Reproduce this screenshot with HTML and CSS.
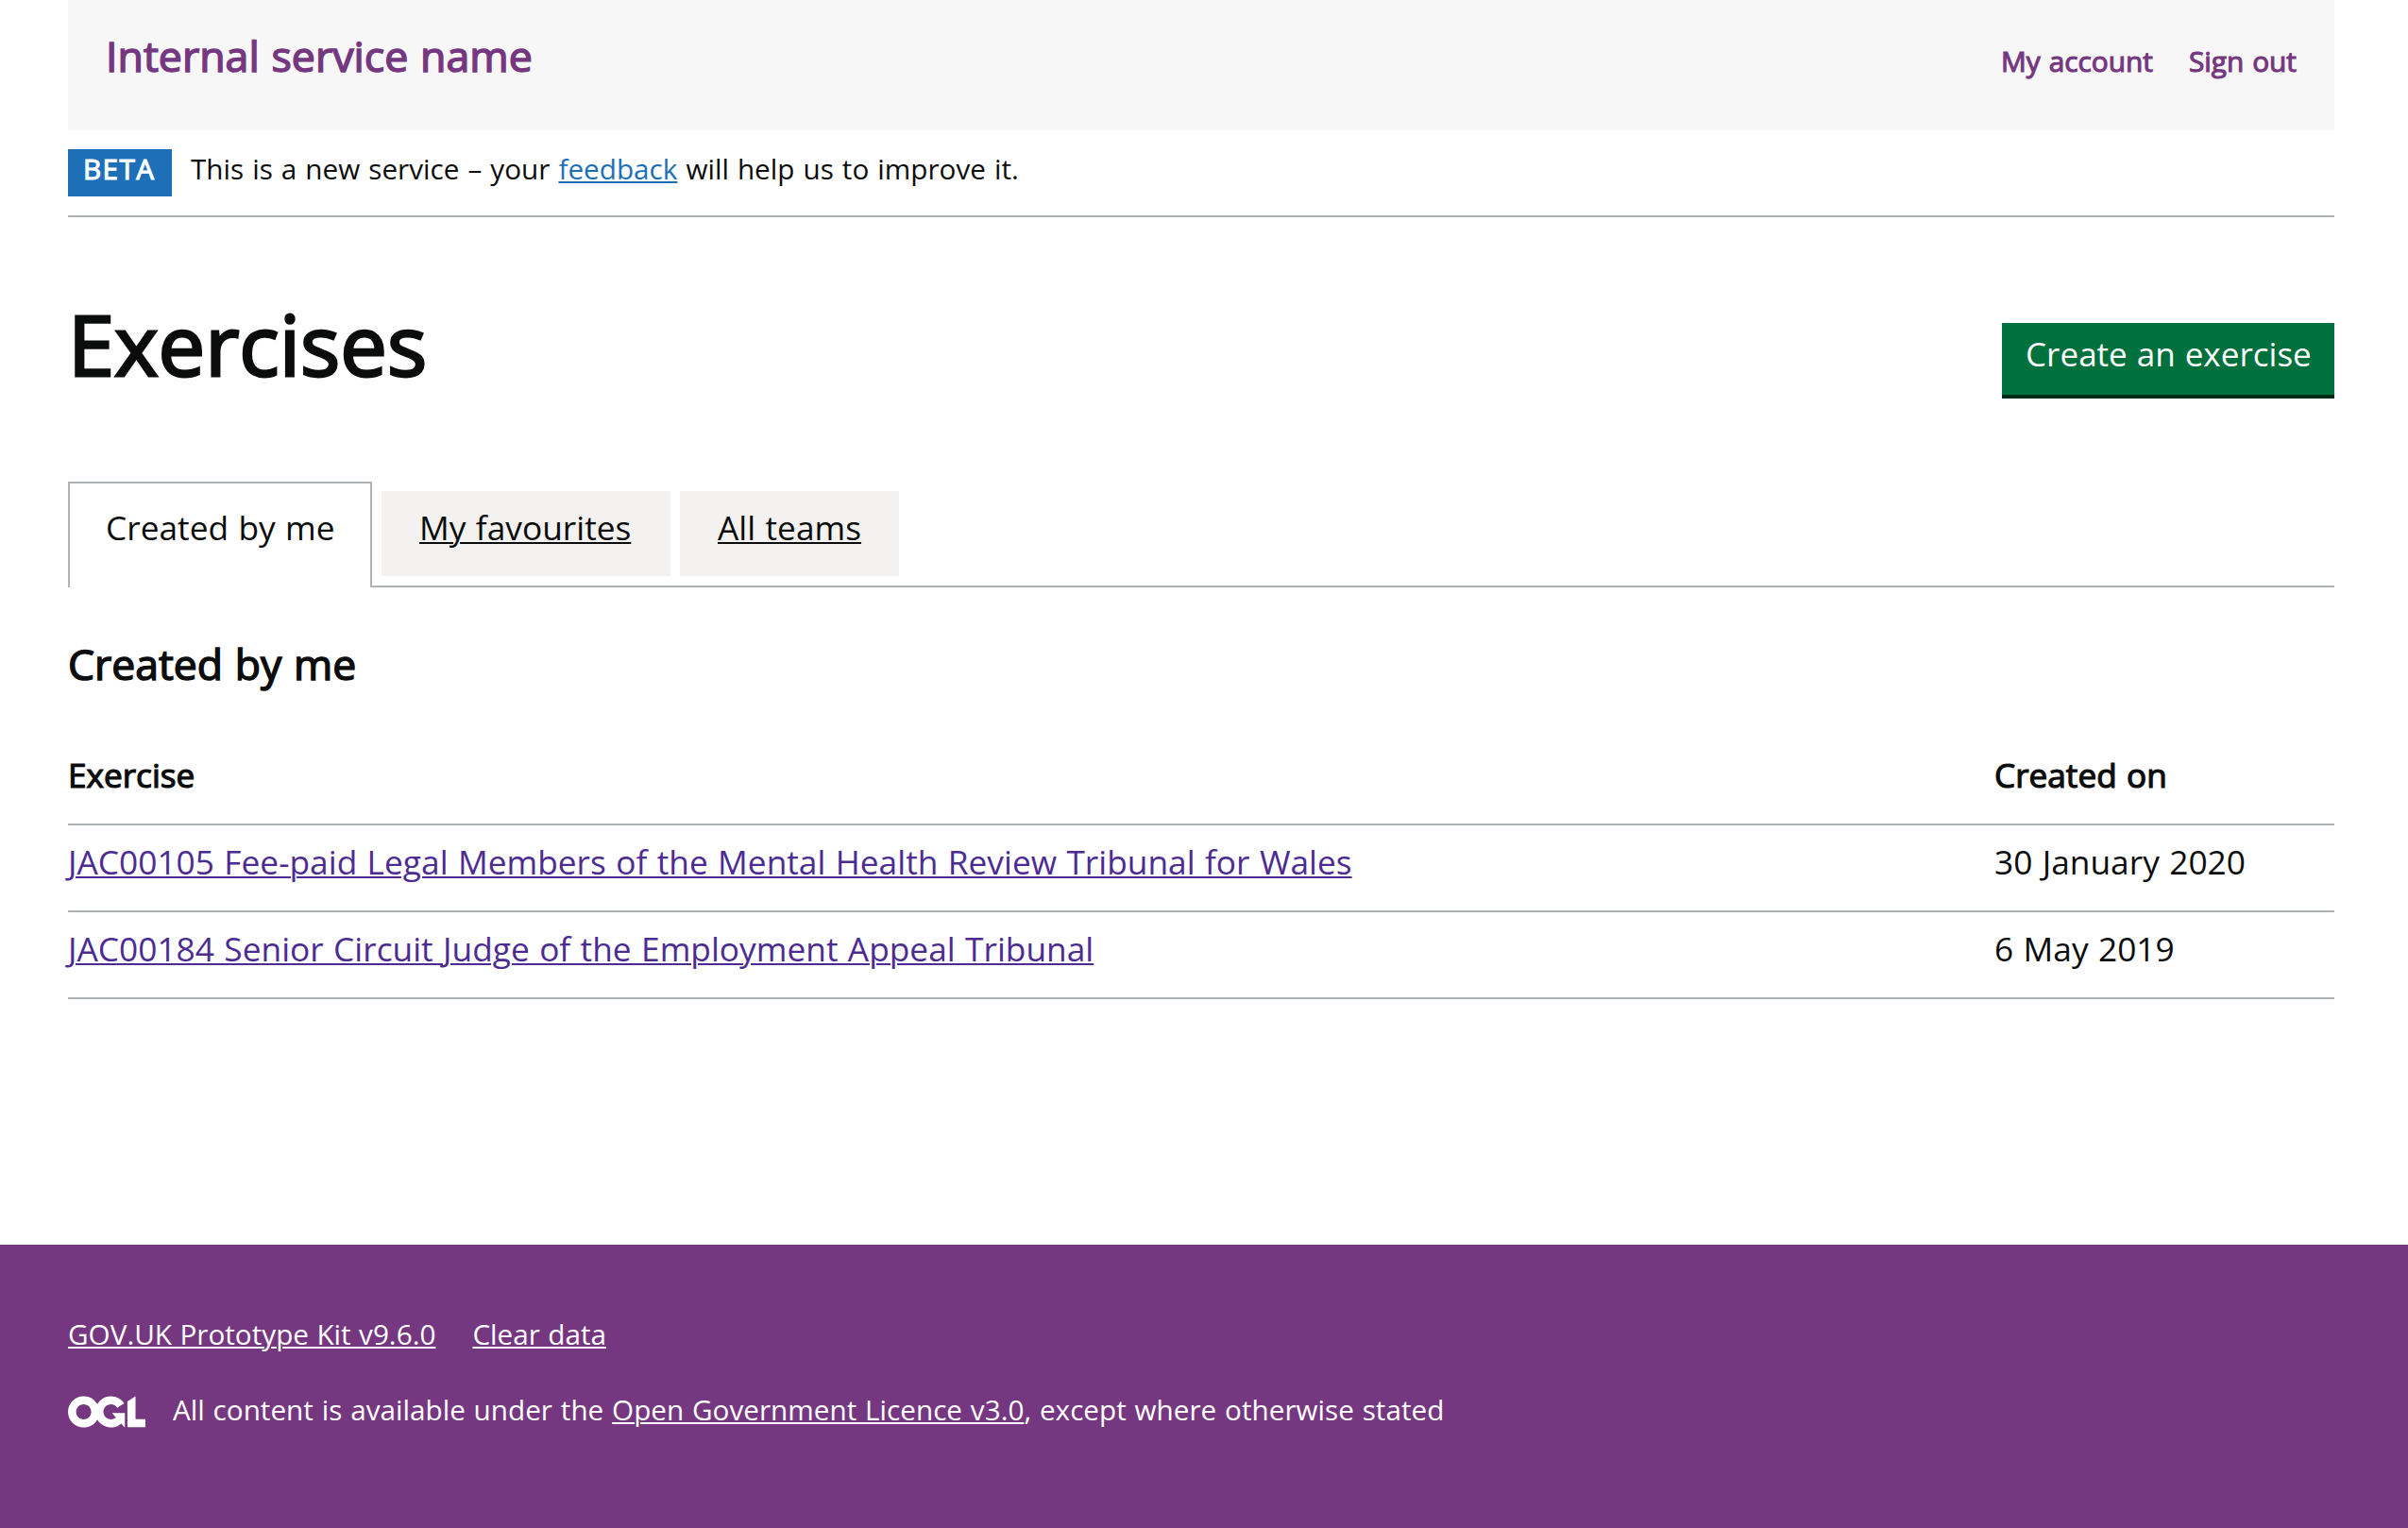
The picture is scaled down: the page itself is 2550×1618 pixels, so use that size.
FILE: index.html
```html
<!DOCTYPE html>
<html lang="en">
<head>
<meta charset="utf-8">
<title>Exercises</title>
<link rel="stylesheet" href="styles.css">
</head>
<body>
<header class="header">
  <a class="header-name" href="#">Internal service name</a>
  <nav class="header-nav">
    <a href="#">My account</a>
    <a href="#">Sign out</a>
  </nav>
</header>
<div class="phase">
  <strong class="tag">BETA</strong>
  <span class="phase-text">This is a new service – your <a href="#">feedback</a> will help us to improve it.</span>
</div>
<main class="main">
  <div class="title-row">
    <h1>Exercises</h1>
    <a class="button" href="#">Create an exercise</a>
  </div>
  <ul class="tabs">
    <li class="tab tab-selected"><a href="#">Created by me</a></li>
    <li class="tab tab-favourites"><a href="#">My favourites</a></li>
    <li class="tab"><a href="#">All teams</a></li>
  </ul>
  <h2>Created by me</h2>
  <table class="table">
    <thead>
      <tr><th>Exercise</th><th class="date">Created on</th></tr>
    </thead>
    <tbody>
      <tr><td><a href="#">JAC00105 Fee-paid Legal Members of the Mental Health Review Tribunal for Wales</a></td><td>30 January 2020</td></tr>
      <tr><td><a href="#">JAC00184 Senior Circuit Judge of the Employment Appeal Tribunal</a></td><td>6 May 2019</td></tr>
    </tbody>
  </table>
</main>
<footer class="footer">
  <nav class="footer-links">
    <a href="#">GOV.UK Prototype Kit v9.6.0</a>
    <a href="#">Clear data</a>
  </nav>
  <div class="licence">
    <svg class="licence-logo" viewBox="0 0 483.2 195.7" width="82" height="34" aria-hidden="true"><path fill="currentColor" d="M421.5 142.8V.1l-50.7 32.3v161.1h112.4v-50.7zm-122.3-9.6A47.12 47.12 0 0 1 221 97.8c0-26 21.1-47.1 47.1-47.1 16.7 0 31.4 8.7 39.7 21.8l42.7-27.2A97.63 97.63 0 0 0 268.1 0c-36.5 0-68.3 20.1-85.1 49.7A98 98 0 0 0 97.8 0C43.9 0 0 43.9 0 97.8s43.9 97.8 97.8 97.8c36.5 0 68.3-20.1 85.1-49.7a97.76 97.76 0 0 0 149.6 25.4l19.4 22.2h3v-87.8h-80l24.3 27.5zM97.8 145c-26 0-47.1-21.1-47.1-47.1s21.1-47.1 47.1-47.1 47.1 21.1 47.1 47.1S123.8 145 97.8 145"/></svg>
    <span>All content is available under the <a href="#">Open Government Licence v3.0</a>, except where otherwise stated</span>
  </div>
</footer>
</body>
</html>
```
FILE: styles.css
```css
* {
  box-sizing: border-box;
}

body {
  margin: 0;
  min-height: 1618px;
  display: flex;
  flex-direction: column;
  background: #fff;
  color: #0b0c0c;
  font-family: "Open Sans", "Noto Sans", sans-serif;
  font-size: 35.3px;
  line-height: 50px;
  word-spacing: 1.2px;
}

a {
  color: inherit;
  text-decoration-thickness: 2px;
  text-underline-offset: 2px;
}

h1,
h2 {
  margin: 0;
  font-weight: 400;
}

.header {
  margin: 0 78px 0 72px;
  height: 138px;
  padding: 29px 40px 0;
  display: flex;
  justify-content: space-between;
  background: #f7f7f7;
  color: #75377f;
}

.header a {
  text-decoration: none;
}

.header-name {
  font-size: 44.7px;
  line-height: 60px;
  -webkit-text-stroke: 1.5px;
}

.header-nav {
  display: flex;
  gap: 38px;
  padding-top: 16px;
  font-size: 29.8px;
  line-height: 40px;
  -webkit-text-stroke: 1.1px;
}

.phase {
  margin: 0 78px 0 72px;
  height: 92px;
  padding-top: 20px;
  display: flex;
  gap: 20px;
  border-bottom: 2px solid #b1b4b6;
  font-size: 29.7px;
  line-height: 42px;
}

.tag {
  width: 110px;
  height: 50px;
  padding: 0 0 0 16px;
  background: #1d70b8;
  color: #fff;
  font-weight: 400;
  letter-spacing: 1.4px;
  -webkit-text-stroke: 1.1px;
}

.phase-text {
  word-spacing: 1.3px;
}

.phase-text a {
  color: #1d70b8;
}

.main {
  margin: 0 78px 0 72px;
}

.title-row {
  height: 280px;
  display: flex;
  justify-content: space-between;
  align-items: flex-start;
}

h1 {
  padding-top: 84px;
  font-size: 88.5px;
  line-height: 100px;
  -webkit-text-stroke: 2.8px;
}

.button {
  margin-top: 112px;
  width: 352px;
  height: 80px;
  padding: 7px 0 0 25px;
  background: #00703c;
  border-bottom: 4px solid #002d18;
  color: #fff;
  font-size: 35.1px;
  word-spacing: 0.8px;
  text-decoration: none;
  white-space: nowrap;
}

.tabs {
  margin: 0;
  padding: 0;
  height: 112px;
  display: flex;
  align-items: flex-start;
  gap: 10px;
  border-bottom: 2px solid #b1b4b6;
  list-style: none;
}

.tab {
  width: 232px;
  height: 90px;
  margin-top: 10px;
  padding: 13px 0 0 40px;
  background: #f3f2f1;
  white-space: nowrap;
}

.tab-favourites {
  width: 306px;
}

.tab-selected {
  width: 322px;
  height: 112px;
  margin-top: 0;
  padding: 21px 0 0 38px;
  border: 2px solid #b1b4b6;
  border-bottom: 0;
  background: #fff;
}

.tab-selected a {
  text-decoration: none;
}

h2 {
  padding-top: 51px;
  height: 154px;
  font-size: 44.5px;
  line-height: 60px;
  -webkit-text-stroke: 1.5px;
}

.table {
  width: 100%;
  border-collapse: separate;
  border-spacing: 0;
  table-layout: fixed;
}

.table th,
.table td {
  height: 92px;
  padding: 13px 0 27px;
  border-bottom: 2px solid #b1b4b6;
  text-align: left;
  vertical-align: top;
}

.table th {
  height: 98px;
  padding-top: 19px;
  font-size: 35.2px;
  font-weight: 400;
  -webkit-text-stroke: 1.2px;
}

.table .date {
  width: 360px;
}

.table a {
  color: #4c2c92;
}

.footer {
  margin-top: auto;
  height: 300px;
  padding: 75px 72px 0;
  background: #75377f;
  color: #fff;
  font-size: 29.7px;
  line-height: 40px;
  word-spacing: 1.1px;
}

.footer-links {
  display: flex;
  gap: 39px;
  margin-bottom: 40px;
  word-spacing: 0.7px;
}

.licence {
  display: flex;
  gap: 29px;
}

.licence-logo {
  margin-top: 5px;
}
```
